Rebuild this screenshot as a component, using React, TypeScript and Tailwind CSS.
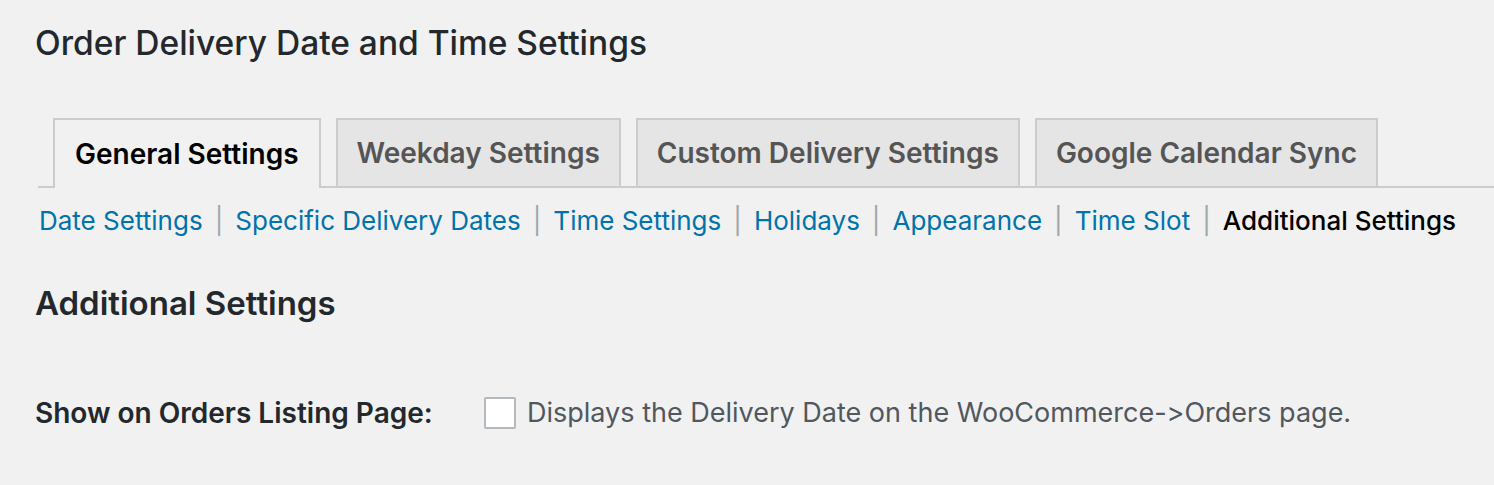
const tabs = ["General Settings", "Weekday Settings", "Custom Delivery Settings", "Google Calendar Sync"]

const links = ["Date Settings", "Specific Delivery Dates", "Time Settings", "Holidays", "Appearance", "Time Slot"]

const App = () => {
  return (
    <div className="min-h-[485px] w-[1494px] bg-[#f1f1f1] text-[#23282d] font-['Inter',sans-serif] [font-feature-settings:'calt'_0] overflow-hidden">
      <h1 className="pl-[35px] pt-[23px] text-[33.5px] leading-[40px] font-medium">
        Order Delivery Date and Time Settings
      </h1>

      <nav className="ml-[38px] mt-[55px] flex items-end gap-[15px] border-b-2 border-[#cccccc] pl-[15px]">
        {tabs.map((t, i) => (
          <div
            key={t}
            className={
              i === 0
                ? "-mb-[2px] h-[70px] flex items-center px-[20px] border-2 border-b-0 border-[#cccccc] bg-[#f1f1f1] text-[28px] font-semibold text-black"
                : "h-[68px] flex items-center px-[19px] border-2 border-b-0 border-[#cccccc] bg-[#e5e5e5] text-[28px] font-semibold text-[#555555]"
            }
          >
            {t}
          </div>
        ))}
      </nav>

      <ul className="flex items-center pl-[39px] mt-[15px] text-[26px] leading-[36px]">
        {links.map((l) => (
          <li key={l} className="flex items-center">
            <a className="text-[#0073aa]">{l}</a>
            <span className="px-[12px] text-[#a0a5aa]">|</span>
          </li>
        ))}
        <li className="font-medium text-black">Additional Settings</li>
      </ul>

      <h2 className="pl-[35px] mt-[44px] text-[33px] leading-[40px] font-semibold">Additional Settings</h2>

      <div className="flex items-center pl-[35px] mt-[72px] h-[36px]">
        <label className="w-[449px] text-[28px] font-semibold">Show on Orders Listing Page:</label>
        <span className="w-[32px] h-[32px] border-2 border-[#b4b9be] bg-white rounded-[2px]" />
        <span className="ml-[11px] text-[27px] text-[#50575e]">
          Displays the Delivery Date on the WooCommerce-&gt;Orders page.
        </span>
      </div>
    </div>
  )
}

export default App
